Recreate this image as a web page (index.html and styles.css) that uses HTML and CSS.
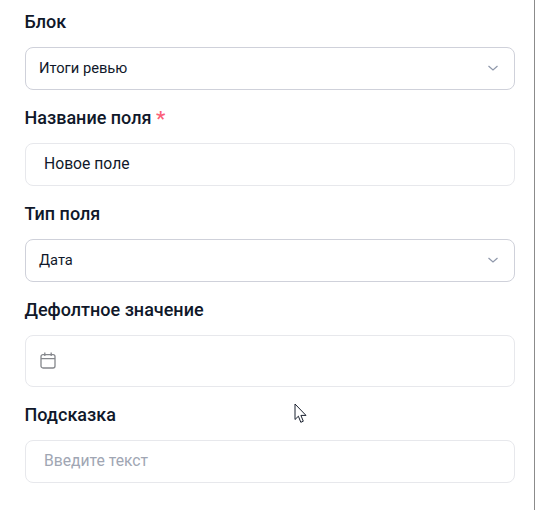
FILE: index.html
```html
<!DOCTYPE html>
<html lang="ru">
<head>
<meta charset="utf-8">
<title>Поле</title>
<link rel="stylesheet" href="styles.css">
</head>
<body>
<form class="panel">
  <div class="field">
    <div class="label">Блок</div>
    <div class="box select">
      <span class="value">Итоги ревью</span>
      <svg class="chevron" width="12" height="8" viewBox="0 0 12 8"><path d="M1.5 2 6 6 10.5 2" fill="none" stroke="#8f98ab" stroke-width="1.2"/></svg>
    </div>
  </div>
  <div class="field">
    <div class="label">Название поля <span class="req">*</span></div>
    <div class="box input"><span class="text">Новое поле</span></div>
  </div>
  <div class="field">
    <div class="label">Тип поля</div>
    <div class="box select">
      <span class="value">Дата</span>
      <svg class="chevron" width="12" height="8" viewBox="0 0 12 8"><path d="M1.5 2 6 6 10.5 2" fill="none" stroke="#8f98ab" stroke-width="1.2"/></svg>
    </div>
  </div>
  <div class="field">
    <div class="label">Дефолтное значение</div>
    <div class="box date">
      <svg width="16" height="17" viewBox="0 0 16 17"><g fill="none" stroke="#85878c" stroke-width="1.3"><rect x="1" y="2.6" width="14" height="13.4" rx="2"/><path d="M1 6.6H15M4.8.5V4M11.2.5V4"/></g></svg>
    </div>
  </div>
  <div class="field">
    <div class="label">Подсказка</div>
    <div class="box input"><span class="placeholder">Введите текст</span></div>
  </div>
  <svg class="cursor" width="13" height="21" viewBox="0 0 13 21"><path d="M1 1V16.5L4.4 13.2 6.8 19.3 9.3 18.2 6.9 12.4H12Z" fill="#fff" stroke="#1b2230" stroke-width="1"/></svg>
</form>
</body>
</html>
```
FILE: styles.css
```css
* { box-sizing: border-box; }
html, body { margin: 0; height: 100%; background: #fff; }
body { font-family: Roboto, "Noto Sans", sans-serif; color: #10182a; overflow: hidden; }
.panel {
  position: relative;
  width: 535px;
  height: 510px;
  padding: 10px 19px 0 25px;
  border-right: 1px solid #8b8b8b;
  display: flex;
  flex-direction: column;
  gap: 16px;
}
.field { display: flex; flex-direction: column; gap: 13px; }
.label { font-size: 18px; font-weight: 500; line-height: 24px; text-indent: -0.5px; }
.req { color: #fb5f78; font-size: 21px; line-height: 0; vertical-align: -2px; }
.box {
  display: flex;
  align-items: center;
  height: 43px;
  border: 1px solid #e7e8ec;
  border-radius: 8px;
  background: #fff;
}
.select { border-color: #cfd1da; padding: 0 15px 1px 13px; justify-content: space-between; font-size: 14.7px; line-height: 40px; }
.input { padding: 0 18px 2px; font-size: 15.7px; line-height: 39px; }
.date { height: 52px; padding: 0 14px 2px; }
.placeholder { color: #a0a6b3; }
.cursor { position: absolute; left: 294px; top: 403px; }
```
